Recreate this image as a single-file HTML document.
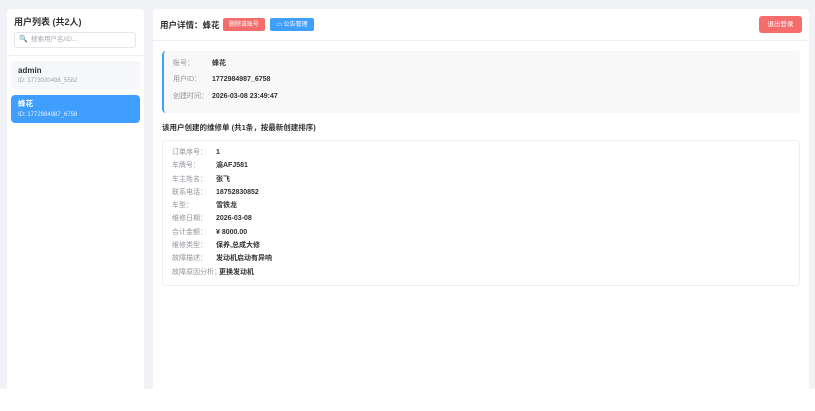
<!DOCTYPE html>
<html><head><meta charset="utf-8"><style>
*{margin:0;padding:0;box-sizing:border-box}
body{width:815px;height:411px;overflow:hidden;background:#fff;font-family:"Liberation Sans","Noto Sans CJK SC",sans-serif;position:relative;color:#303133}
.bg{position:absolute;left:0;top:0;width:815px;height:389px;background:#f0f2f5}
.p{position:absolute;background:#fff;border-radius:4px 4px 0 0}
.a{position:absolute;white-space:nowrap;line-height:10px}
.lab{position:absolute;left:9px;font-size:7px;line-height:10px;height:10px;color:#909399;white-space:nowrap}
.val{position:absolute;left:53px;font-size:7px;line-height:10px;height:10px;font-weight:bold;color:#303133;white-space:nowrap}
.btn{position:absolute;color:#fff;text-align:center;border-radius:2px;white-space:nowrap}
</style></head><body>
<div class="bg"></div>
<div class="p" style="left:7px;top:9px;width:137px;height:380px">
 <div class="a" style="left:7px;top:7px;font-size:9px;line-height:12px;font-weight:bold">用户列表 (共2人)</div>
 <div class="a" style="left:7px;top:23px;width:122px;height:16px;border:1px solid #e4e7ed;border-radius:3px;font-size:6.5px;line-height:14px;color:#a8abb2;padding-left:16px">搜索用户名/ID...<span style="position:absolute;left:4px;top:0;font-size:7px">&#128269;</span></div>
 <div class="a" style="left:0;top:46px;width:137px;border-top:1px solid #ebeef5"></div>
 <div class="a" style="left:4px;top:52px;width:129px;height:28px;background:#f5f7fa;border-radius:4px">
  <div class="a" style="left:7px;top:5px;font-size:8px;font-weight:bold">admin</div>
  <div class="a" style="left:7px;top:16px;font-size:6px;line-height:8px;color:#a0a3a8">ID: 1773030498_5582</div>
 </div>
 <div class="a" style="left:4px;top:86px;width:129px;height:28px;background:#409eff;border-radius:4px;color:#fff">
  <div class="a" style="left:7px;top:4px;font-size:7.5px;font-weight:bold">蜂花</div>
  <div class="a" style="left:7px;top:16px;font-size:6px;line-height:8px;color:#e8f2ff">ID: 1772984987_6758</div>
 </div>
</div>
<div class="p" style="left:153px;top:9px;width:656px;height:380px">
 <div class="a" style="left:7px;top:10px;font-size:8.5px;line-height:12px;font-weight:bold">用户详情：蜂花</div>
 <div class="btn" style="left:70px;top:9px;width:42px;height:13px;background:#f56c6c;font-size:6px;line-height:14px">删除该账号</div>
 <div class="btn" style="left:117px;top:9px;width:44px;height:13px;background:#409eff;font-size:6px;line-height:14px">&#9645; 公告管理</div>
 <div class="btn" style="left:606px;top:7px;width:43px;height:17px;background:#f56c6c;border-radius:3px;font-size:6.5px;line-height:18px">退出登录</div>
 <div class="a" style="left:0;top:31px;width:656px;border-top:1px solid #ebeef5"></div>
 <div class="a" style="left:9px;top:42px;width:638px;height:62px;background:#f8f8f9;border-left:2px solid #409eff;border-radius:4px">
  <div class="lab" style="top:8px">账号：</div><div class="val" style="left:48px;top:8px">蜂花</div>
  <div class="lab" style="top:24px">用户ID：</div><div class="val" style="left:48px;top:24px">1772984987_6758</div>
  <div class="lab" style="top:41px">创建时间：</div><div class="val" style="left:48px;top:41px">2026-03-08 23:49:47</div>
 </div>
 <div class="a" style="left:9px;top:114px;font-size:7.5px;font-weight:bold">该用户创建的维修单 (共1条，按最新创建排序)</div>
 <div class="a" style="left:9px;top:131px;width:638px;height:146px;border:1px solid #ebeef5;border-radius:4px">
  <div class="lab" style="top:7px">订单序号：</div><div class="val" style="top:7px">1</div>
  <div class="lab" style="top:20px">车牌号：</div><div class="val" style="top:20px">渝AFJ581</div>
  <div class="lab" style="top:34px">车主姓名：</div><div class="val" style="top:34px">张飞</div>
  <div class="lab" style="top:47px">联系电话：</div><div class="val" style="top:47px">18752830852</div>
  <div class="lab" style="top:60px">车型：</div><div class="val" style="top:60px">雪铁龙</div>
  <div class="lab" style="top:73px">维修日期：</div><div class="val" style="top:73px">2026-03-08</div>
  <div class="lab" style="top:87px">合计金额：</div><div class="val" style="top:87px">¥ 8000.00</div>
  <div class="lab" style="top:100px">维修类型：</div><div class="val" style="top:100px">保养,总成大修</div>
  <div class="lab" style="top:113px">故障描述：</div><div class="val" style="top:113px">发动机启动有异响</div>
  <div class="lab" style="top:127px">故障原因分析：</div><div class="val" style="left:56px;top:127px">更换发动机</div>
 </div>
</div>
</body></html>
